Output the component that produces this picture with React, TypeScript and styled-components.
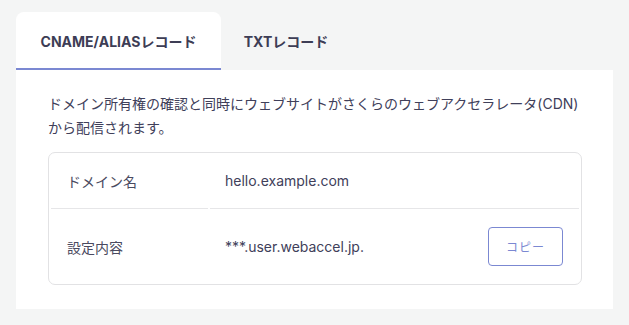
import React from "react";
import styled, { createGlobalStyle } from "styled-components";

const Global = createGlobalStyle`
  html, body { margin: 0; padding: 0; background: #f4f5f5; }
  body { font-family: Inter, "Noto Sans CJK JP", sans-serif; color: #40405a; }
`;

const Page = styled.div`
  padding: 12px 16px 17px 16px;
  width: 629px;
  box-sizing: border-box;
`;

const Tabs = styled.div`
  display: flex;
`;

const Tab = styled.div<{ $active?: boolean }>`
  width: ${(p) => (p.$active ? "205px" : "130px")};
  height: 58px;
  box-sizing: border-box;
  display: flex;
  align-items: center;
  justify-content: center;
  font-size: 14px;
  font-weight: 700;
  color: #3d3d55;
  background: ${(p) => (p.$active ? "#fff" : "transparent")};
  border-radius: 8px 8px 0 0;
  border-bottom: 2px solid ${(p) => (p.$active ? "#7b88d2" : "transparent")};
  padding-top: 2px;
`;

const Panel = styled.div`
  background: #fff;
  padding: 22px 31px 24px 32px;
`;

const Description = styled.p`
  margin: 0 0 12px 0;
  font-size: 14px;
  line-height: 24px;
  color: #40405a;
`;

const Table = styled.div`
  border: 1px solid #e2e2e4;
  border-radius: 7px;
  padding: 0 2px;
  display: grid;
  grid-template-columns: 157px 1fr;
  column-gap: 2px;
`;

const Cell = styled.div<{ $h: number; $divider?: boolean; $label?: boolean }>`
  height: ${(p) => p.$h}px;
  display: flex;
  align-items: center;
  justify-content: space-between;
  box-sizing: border-box;
  padding-left: ${(p) => (p.$label ? "16px" : "15px")};
  padding-right: 16px;
  border-bottom: ${(p) => (p.$divider ? "1px solid #e6e6e8" : "none")};
  font-size: 14px;
  color: ${(p) => (p.$label ? "#4a4a60" : "#40405a")};
`;

const CopyButton = styled.button`
  width: 75px;
  height: 39px;
  border: 1px solid #7b88d2;
  border-radius: 4px;
  background: #fff;
  color: #7b88d2;
  font-family: "Noto Sans CJK JP", sans-serif;
  font-size: 12px;
  letter-spacing: 1px;
  margin-right: 0;
  margin-top: -1px;
  cursor: pointer;
`;

export default function App() {
  return (
    <>
      <Global />
      <Page>
        <Tabs>
          <Tab $active>CNAME/ALIASレコード</Tab>
          <Tab>TXTレコード</Tab>
        </Tabs>
        <Panel>
          <Description>
            ドメイン所有権の確認と同時にウェブサイトがさくらのウェブアクセラレータ(CDN)から配信されます。
          </Description>
          <Table>
            <Cell $h={56} $divider $label>ドメイン名</Cell>
            <Cell $h={56} $divider>hello.example.com</Cell>
            <Cell $h={75} $label>設定内容</Cell>
            <Cell $h={75}>
              ***.user.webaccel.jp.
              <CopyButton>コピー</CopyButton>
            </Cell>
          </Table>
        </Panel>
      </Page>
    </>
  );
}
